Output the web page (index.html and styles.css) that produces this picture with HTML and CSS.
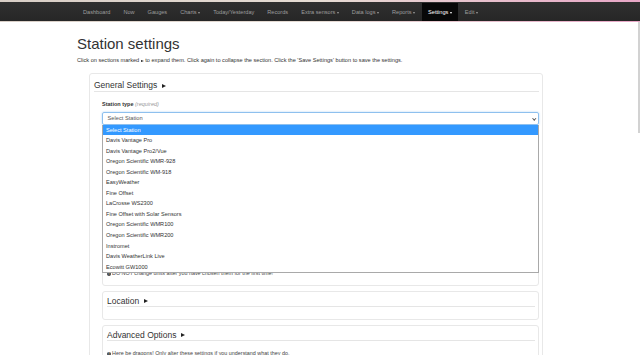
FILE: index.html
```html
<!DOCTYPE html>
<html lang="en">
<head>
  <meta charset="UTF-8">
  <title>Station settings</title>
  <link rel="stylesheet" href="styles.css">
</head>
<body>
  <nav class="navbar">
    <ul class="nav">
      <li><a href="#">Dashboard</a></li>
      <li><a href="#">Now</a></li>
      <li><a href="#">Gauges</a></li>
      <li><a href="#">Charts<b class="caret"></b></a></li>
      <li><a href="#">Today/Yesterday</a></li>
      <li><a href="#">Records</a></li>
      <li><a href="#">Extra sensors<b class="caret"></b></a></li>
      <li><a href="#">Data logs<b class="caret"></b></a></li>
      <li><a href="#">Reports<b class="caret"></b></a></li>
      <li class="active"><a href="#">Settings<b class="caret"></b></a></li>
      <li><a href="#">Edit<b class="caret"></b></a></li>
    </ul>
  </nav>
  <div class="scroll-thumb"></div>

  <main class="container">
    <h1 class="page-title">Station settings</h1>
    <p class="intro">Click on sections marked <span class="arrow"></span> to expand them. Click again to collapse the section. Click the 'Save Settings' button to save the settings.</p>

    <section class="panel">
      <h2 class="panel-heading">General Settings <span class="arrow arrow-lg"></span></h2>
      <div class="panel-body">
        <div class="field">
          <label class="field-label">Station type <i class="hint">(required)</i></label>
          <div class="select-box">Select Station<span class="chevron"></span></div>
          <!-- geöffnete Auswahlliste -->
          <ul class="dropdown">
            <li class="selected">Select Station</li>
            <li>Davis Vantage Pro</li>
            <li>Davis Vantage Pro2/Vue</li>
            <li>Oregon Scientific WMR-928</li>
            <li>Oregon Scientific WM-918</li>
            <li>EasyWeather</li>
            <li>Fine Offset</li>
            <li>LaCrosse WS2300</li>
            <li>Fine Offset with Solar Sensors</li>
            <li>Oregon Scientific WMR100</li>
            <li>Oregon Scientific WMR200</li>
            <li>Instromet</li>
            <li>Davis WeatherLink Live</li>
            <li>Ecowitt GW1000</li>
          </ul>
        </div>

        <div class="subpanel units">
          <div class="units-body"></div>
          <p class="note"><span class="info-icon">!</span>DO NOT change units after you have chosen them for the first time!</p>
        </div>

        <div class="subpanel">
          <h3 class="sub-heading">Location <span class="arrow arrow-lg"></span></h3>
        </div>

        <div class="subpanel">
          <h3 class="sub-heading">Advanced Options <span class="arrow arrow-lg"></span></h3>
          <p class="note"><span class="info-icon">!</span>Here be dragons! Only alter these settings if you understand what they do.</p>
        </div>
      </div>
    </section>
  </main>
</body>
</html>
```

FILE: styles.css
```css
* {
  box-sizing: border-box;
}
body {
  margin: 0;
  font-family: "Liberation Sans", Arial, sans-serif;
  color: #333;
  background: #fff;
  overflow: hidden;
}

/* Navigation */
.navbar {
  height: 22px;
  border-top: 2px solid #e4d8d2;
  border-image: linear-gradient(90deg, #d8cec6, #e6dcd4 50%, #e8a6c6) 1;
  padding-top: 1px;
  background: linear-gradient(#303030, #262626);
  border-bottom: 1px solid #151515;
}
.nav {
  display: flex;
  margin: 0 0 0 76.5px;
  padding: 0;
  list-style: none;
}
.nav a {
  display: block;
  height: 18px;
  line-height: 18px;
  padding: 0 6.5px;
  font-size: 5.6px;
  color: #9d9d9d;
  text-decoration: none;
}
.nav .active a {
  background: #080808;
  color: #fff;
}
.caret {
  display: inline-block;
  vertical-align: middle;
  margin-left: 1.5px;
  border-top: 2px solid;
  border-left: 1.5px solid transparent;
  border-right: 1.5px solid transparent;
}
.scroll-thumb {
  position: fixed;
  right: 0;
  top: 22px;
  width: 2px;
  height: 111px;
  background: #d2d2d2;
}

/* Seite */
.container {
  padding-left: 77px;
}
.page-title {
  margin: 13px 0 0;
  font-size: 15px;
  line-height: 17px;
  font-weight: 500;
}
.intro {
  margin: 4px 0 0;
  font-size: 5.6px;
  line-height: 8px;
}
.arrow {
  display: inline-block;
  border-left: 3px solid #222;
  border-top: 1.5px solid transparent;
  border-bottom: 1.5px solid transparent;
  vertical-align: middle;
}
.arrow-lg {
  border-left-width: 4px;
  border-top-width: 2px;
  border-bottom-width: 2px;
  margin-left: 2px;
}

/* Panels */
.panel {
  width: 454px;
  margin: 9px 0 0 12px;
  padding: 6px 3px 0 4px;
  border: 1px solid #e8e8e8;
  border-radius: 3px;
  height: 300px;
}
.panel-heading {
  margin: 0;
  font-size: 8.5px;
  line-height: 10px;
  font-weight: normal;
  padding-bottom: 1px;
  border-bottom: 1px solid #e5e5e5;
}
.panel-body {
  padding-left: 8px;
}
.field {
  position: relative;
  padding-top: 9px;
}
.field-label {
  display: block;
  font-size: 5.5px;
  line-height: 7px;
  font-weight: bold;
}
.hint {
  font-weight: normal;
  color: #999;
}
.select-box {
  position: relative;
  margin-top: 3.5px;
  height: 13px;
  line-height: 11px;
  padding-left: 4.5px;
  font-size: 5.7px;
  color: #555;
  border: 1px solid #8ec0ee;
  border-radius: 2px;
  box-shadow: 0 0 2px rgba(102, 175, 233, 0.6);
}
.chevron {
  position: absolute;
  right: 3px;
  top: 4px;
  width: 2.5px;
  height: 2.5px;
  border-right: 1px solid #555;
  border-bottom: 1px solid #555;
  transform: rotate(45deg);
}
.dropdown {
  position: absolute;
  z-index: 2;
  left: 0;
  right: 0;
  top: 32.5px;
  margin: 0;
  padding: 0;
  list-style: none;
  background: #fff;
  border: 1px solid #a9a9a9;
  border-top: none;
}
.dropdown li {
  height: 10.55px;
  line-height: 10.55px;
  padding-left: 3px;
  font-size: 5.6px;
  color: #333;
}
.dropdown .selected {
  background: #3399ff;
  color: #fff;
}
.subpanel {
  margin-top: 5px;
  padding: 4px 3px 0 4px;
  border: 1px solid #e8e8e8;
  border-radius: 3px;
}
.units {
  margin-top: 6px;
  padding-bottom: 8px;
}
.units-body {
  height: 137px;
}
.sub-heading {
  margin: 0;
  font-size: 8.5px;
  line-height: 10px;
  font-weight: normal;
  border-bottom: 1px solid #e5e5e5;
  margin-bottom: 12px;
}
.note {
  margin: -3px 0 0;
  font-size: 5.4px;
  line-height: 7px;
  color: #444;
}
.info-icon {
  display: inline-block;
  width: 4px;
  height: 4px;
  margin-right: 1px;
  border-radius: 50%;
  background: #444;
  color: #fff;
  font-size: 3px;
  line-height: 4px;
  text-align: center;
  font-weight: bold;
  vertical-align: -0.5px;
}
```
